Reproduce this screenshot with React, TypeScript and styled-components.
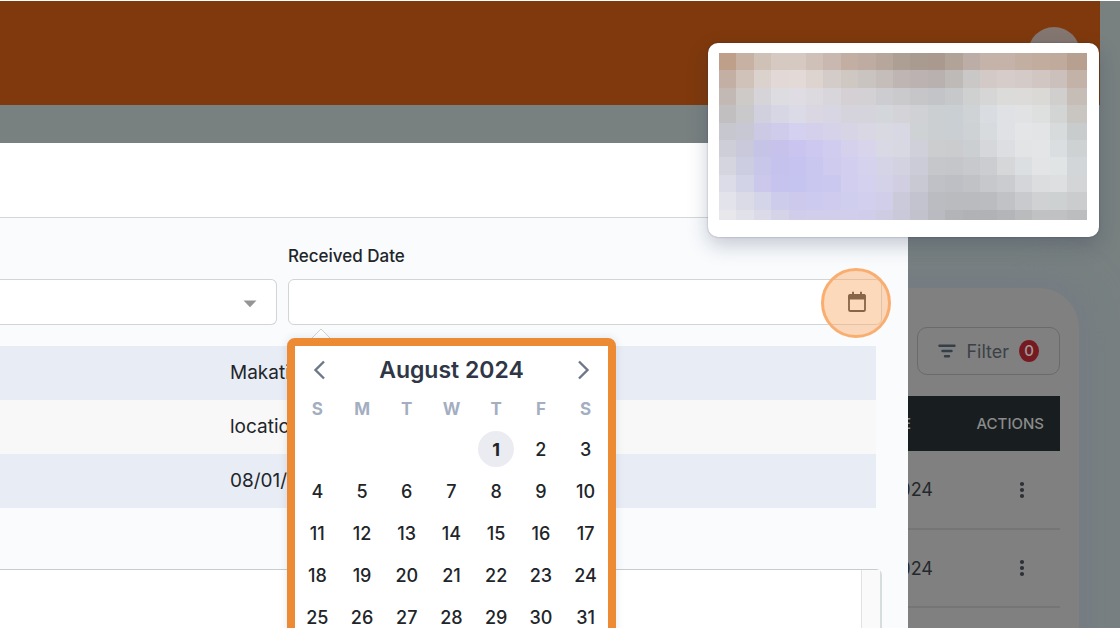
import React from "react";
import styled, { createGlobalStyle } from "styled-components";

const GlobalStyle = createGlobalStyle`
  *, *::before, *::after { box-sizing: border-box; }
  body {
    margin: 0;
    background: #788080;
    font-family: Inter, "Liberation Sans", sans-serif;
    color: #212529;
  }
  button, input, select, textarea { font: inherit; color: inherit; }
`;

const Page = styled.div`
  position: relative;
  height: 100vh;
  overflow: hidden;
  padding-right: 20px;
  border-top: 1px solid #ffffff;
`;

const TopBar = styled.header`
  display: flex;
  justify-content: flex-end;
  height: 104px;
  padding: 26px 20px;
  background: #7f390c;
`;

const Avatar = styled.div`
  width: 52px;
  height: 52px;
  border-radius: 50%;
  background: #847670;
`;

const Card = styled.main`
  margin: 183px 21px 0 0;
  padding: 39px 19px 0 0;
  min-height: 480px;
  border-radius: 0 40px 0 0;
  background: #808080;
  box-shadow: 0 0 40px 8px #747b85;
`;

const CardTools = styled.div`
  display: flex;
  justify-content: flex-end;
  margin-bottom: 21px;
`;

const FilterButton = styled.button`
  display: flex;
  align-items: center;
  gap: 10px;
  height: 48px;
  padding: 0 20px;
  border: 1px solid #6a6a6a;
  border-radius: 10px;
  background: transparent;
  color: #3b4146;
  font-size: 18px;
`;

const Badge = styled.span`
  width: 20px;
  height: 22px;
  border-radius: 50%;
  background: #761a22;
  color: #a09a9a;
  font-size: 15px;
  font-weight: 500;
  line-height: 22px;
  text-align: center;
`;

const Records = styled.table`
  width: 100%;
  border-collapse: collapse;
`;

const HeadCell = styled.th<{ $end: number }>`
  height: 55px;
  padding: 0 ${(p) => p.$end}px 0 0;
  background: #181e20;
  color: #8b8b8b;
  font-size: 15px;
  font-weight: 500;
  text-align: right;

  &:last-child { width: 109px; }
`;

const Cell = styled.td<{ $end: number }>`
  height: 78px;
  padding: 0 ${(p) => p.$end}px 0 0;
  border-bottom: 2px solid #757575;
  color: #24282b;
  font-size: 18px;
  text-align: right;
`;

const IconButton = styled.button`
  display: inline-flex;
  align-items: center;
  justify-content: center;
  padding: 0;
  border: 0;
  background: transparent;
`;

const RowMenuButton = styled(IconButton)`
  display: flex;
  margin-left: auto;
`;

const Modal = styled.section`
  position: absolute;
  top: 142px;
  right: 212px;
  bottom: 0;
  left: 0;
  display: flex;
  flex-direction: column;
  background: #f9fbfd;
`;

const ModalHeader = styled.header`
  flex: none;
  height: 75px;
  border-bottom: 1px solid #d3d7d7;
  background: #ffffff;
`;

const ModalBody = styled.div`
  flex: 1;
  min-height: 0;
  display: flex;
  flex-direction: column;
  padding: 26px 26px 0 0;
`;

const Fields = styled.div`
  display: flex;
  align-items: flex-end;
  gap: 11px;
`;

const SelectBox = styled.div`
  position: relative;
  flex: 0 0 277px;
`;

const Select = styled.select`
  display: block;
  appearance: none;
  width: 100%;
  height: 46px;
  border: 1px solid #d0d5d5;
  border-left: 0;
  border-radius: 0 6px 6px 0;
  background: #ffffff;
`;

const Caret = styled.svg`
  position: absolute;
  top: 21px;
  right: 20px;
  pointer-events: none;
`;

const DateField = styled.div`
  flex: 1;
`;

const Label = styled.label`
  display: block;
  margin-bottom: 11px;
  font-size: 17px;
  font-weight: 500;
  line-height: 24px;
`;

const DateBox = styled.div`
  position: relative;
  display: flex;
  height: 46px;
  border: 1px solid #d0d5d5;
  border-radius: 6px;
  background: #ffffff;
`;

const DateInput = styled.input`
  flex: 1;
  min-width: 0;
  padding: 0 12px;
  border: 0;
  border-radius: 6px;
  background: transparent;
  outline: none;
`;

const CalendarButton = styled(IconButton)`
  width: 48px;
`;

const ClickMarker = styled.span`
  position: absolute;
  top: -12px;
  right: -10px;
  width: 70px;
  height: 70px;
  border: 3px solid #f9ae70;
  border-radius: 50%;
  background: rgba(251, 170, 105, 0.45);
  pointer-events: none;
`;

const Popup = styled.div`
  position: absolute;
  z-index: 2;
  top: 58px;
  left: -2px;
  width: 329px;
  padding-bottom: 16px;
  border: 8px solid #ec8b33;
  border-radius: 8px;
  background: #ffffff;
  box-shadow: 0 0 8px rgba(40, 60, 90, 0.12);
`;

const PopupTip = styled.svg`
  position: absolute;
  top: 48px;
  left: 22px;
`;

const MonthBar = styled.div`
  display: flex;
  align-items: center;
  justify-content: space-between;
  height: 48px;
  padding: 0 12px;
`;

const Month = styled.h2`
  margin: 0;
  color: #2f3747;
  font-size: 23px;
  font-weight: 600;
  line-height: 32px;
`;

const StepButton = styled(IconButton)`
  width: 24px;
  height: 32px;
`;

const Days = styled.table`
  width: 100%;
  border-collapse: collapse;
  table-layout: fixed;
`;

const Weekday = styled.th`
  height: 34px;
  padding: 0 0 4px;
  color: #a3aec0;
  font-size: 17px;
  font-weight: 700;
`;

const DayCell = styled.td`
  height: 42px;
  padding: 0;
  text-align: center;
`;

const Day = styled.button<{ $today: boolean }>`
  width: 36px;
  height: 36px;
  padding: 0;
  border: 0;
  border-radius: 50%;
  background: ${(p) => (p.$today ? "#ebecf2" : "transparent")};
  font-size: 18px;
  font-weight: ${(p) => (p.$today ? 700 : 500)};
`;

const Details = styled.dl`
  flex: none;
  margin: 21px 6px 61px 0;
`;

const Detail = styled.dd`
  height: 54px;
  margin: 0;
  padding-left: 230px;
  background: #f8f8f8;
  font-size: 19px;
  line-height: 54px;

  &:nth-child(odd) { background: #e8ecf5; }
`;

const NotesBox = styled.div`
  flex: 1;
  display: flex;
  min-height: 0;
  border-top: 1px solid #c8cccc;
  border-right: 2px solid #d6dddd;
  border-radius: 0 6px 0 0;
  background: #ffffff;
`;

const Notes = styled.textarea`
  flex: 1;
  border: 0;
  outline: none;
  resize: none;
  background: transparent;
`;

const ScrollTrack = styled.div`
  width: 19px;
  border-left: 1px solid #e2e2e2;
  background: #fafafa;
`;

const Preview = styled.aside`
  position: absolute;
  z-index: 3;
  top: 42px;
  right: 21px;
  width: 391px;
  padding: 10px 12px 17px 11px;
  border-radius: 10px;
  background: #ffffff;
  box-shadow: 0 0 2px rgba(20, 30, 60, 0.35), 0 8px 20px rgba(40, 50, 80, 0.25);
`;

const Mosaic = styled.svg`
  display: block;
  width: 100%;
`;

const tiles = [
  "bd9f8a c7b1a3 d0c1b7 d6c9c1 d6c9c1 d0c1b8 c9b8b0 c2aea3 beaca2 b7a69b ae9f95 aa9b91 a9998f b2a399 bcada7 c5b3a9 c5b3a9 c3afa1 c2ac9d c0aa9b b7a090",
  "c3afa3 d0c2b9 dbd2ce e2d9d6 e3dad7 ddd4d0 d4ccc8 cec7c2 c9c4bf c4bdba bfb6b4 bbb2b1 b9b1b0 bdbab8 c9c8c6 d3cac8 d6ccca d4cac7 d1c6c1 cbc0bb c2b2a7",
  "c2b9b5 cdcac8 d6d4d8 dddce1 dfdde3 dcd9df d9d6db d4d0d4 d4d1d4 cdccd0 cac9cc c6c6c9 c3c4c7 c7c8ca cfd0d0 d6d6d6 dbdbda dcdbda dad9d6 d0cfcd c6bdb6",
  "c1bfbf c9c9cc d0d0de d7d6e5 dbdae7 dad7e3 d8d6e2 d5d4dd d5d4dd d3d6da d3d3d8 cfd1d5 cccfd2 c9cfd3 cfd3d6 d9dce0 dfe1e4 e0e2e4 dedfdf d3d5d5 c9c5c1",
  "c7c7cf c8c8d4 cbc9e3 cecbeb d4d0ef d4d0ec d5d2e9 d7d4e6 d8d7e3 d9d9e2 d7d8e3 cfd2d5 cbcfd2 c9cfd2 ced2d5 d7dbde dfe1e4 e4e5e7 e2e4e5 d8dbdc c9cccd",
  "ceced9 cac9dc c6c4e6 c6c2ec cac5f0 cdc8f0 d0ccef d5d1ec d7d4ec d9d8e5 d7d8e2 cfd0da cbcdce caccce cbcfd1 d5d7db dcdee1 e3e4e6 e4e5e7 dbdee0 cfd2d3",
  "d5d5e0 cccde1 c8c6e9 c5c2ed c7c3f0 c9c6f0 cecbef d1ceef d5d2ed d5d4e7 d3d2e1 ccccd8 c5c7ca c4c6c9 c7c9cc cccdd1 d5d7d9 dcdfe1 e2e4e6 e1e4e5 d3d6d8",
  "dcdce8 d3d3e7 cbc8eb c6c4ef c5c3f0 c9c7f0 cbc8f0 d1cef0 d3d1ee d4d2e8 d0cee0 c9c9d3 c0c1c6 bebfc4 c0c2c6 c6c8cb cbccd0 d5d6d9 dcdddf dddfe1 d3d5d7",
  "e3e3ec dbdbe8 d4d5e9 cdcceb ccc9ed cdcaef cecbef cfceee d1cfed d0cee8 cbcadb c3c3cf bbbcc1 b9bbbf b9bbbf babcc0 c0c2c5 c8cacd cfd1d3 ced1d2 caccce",
  "e8e7ec e1e1ea dadae8 d4d3e8 cfcdea d0ceeb d0ceeb d0ceea cfcde9 cecce3 cac9da c2c2cd babbc0 b3b4b8 b1b2b6 b0b2b6 b3b5b8 b9bbbd bfc1c3 bfc1c3 bbbdbe",
].map((row) => row.split(" "));

const details = ["Makati", "location", "08/01/24"];
const records = ["08/01/2024", "08/01/2024"];
const weekdays = ["S", "M", "T", "W", "T", "F", "S"];
const leadingBlanks = 4;
const weeks = Array.from({ length: 5 }, (_, w) =>
  weekdays.map((_, d) => w * 7 + d + 1 - leadingBlanks)
);

function Chevron({ d }: { d: string }) {
  return (
    <svg width="12" height="20" viewBox="0 0 12 20" fill="none" stroke="#6c7888" strokeWidth="2.4">
      <path d={d} />
    </svg>
  );
}

function DatePicker() {
  return (
    <>
      <Popup role="dialog" aria-label="Choose date">
        <MonthBar>
          <StepButton type="button" aria-label="Previous month">
            <Chevron d="M11 1.5 2.5 10 11 18.5" />
          </StepButton>
          <Month>August 2024</Month>
          <StepButton type="button" aria-label="Next month">
            <Chevron d="M1 1.5 9.5 10 1 18.5" />
          </StepButton>
        </MonthBar>
        <Days>
          <thead>
            <tr>{weekdays.map((d, i) => <Weekday key={i}>{d}</Weekday>)}</tr>
          </thead>
          <tbody>
            {weeks.map((week, w) => (
              <tr key={w}>
                {week.map((n) => (
                  <DayCell key={n}>
                    {n > 0 && <Day type="button" $today={n === 1}>{n}</Day>}
                  </DayCell>
                ))}
              </tr>
            ))}
          </tbody>
        </Days>
      </Popup>
      <PopupTip width="20" height="11" viewBox="0 0 20 11">
        <path d="M0.5 10.5 10 1 19.5 10.5" fill="#fff" stroke="#ccd5d5" />
      </PopupTip>
    </>
  );
}

export default function App() {
  return (
    <>
      <GlobalStyle />
      <Page>
        <TopBar>
          <Avatar />
        </TopBar>

        <Card>
          <CardTools>
            <FilterButton type="button">
              <svg width="18" height="14" viewBox="0 0 18 14" stroke="#343f48" strokeWidth="2.4" strokeLinecap="round">
                <path d="M1.5 1.7h15M4.5 7h9M7 12.3h4" />
              </svg>
              Filter
              <Badge>0</Badge>
            </FilterButton>
          </CardTools>
          <Records>
            <thead>
              <tr>
                <HeadCell $end={40}>DATE</HeadCell>
                <HeadCell $end={16}>ACTIONS</HeadCell>
              </tr>
            </thead>
            <tbody>
              {records.map((date, i) => (
                <tr key={i}>
                  <Cell $end={18}>{date}</Cell>
                  <Cell $end={28}>
                    <RowMenuButton type="button" aria-label="Row actions">
                      <svg width="20" height="20" viewBox="0 0 20 20" fill="#2c3034">
                        <circle cx="10" cy="4" r="2.1" />
                        <circle cx="10" cy="10" r="2.1" />
                        <circle cx="10" cy="16" r="2.1" />
                      </svg>
                    </RowMenuButton>
                  </Cell>
                </tr>
              ))}
            </tbody>
          </Records>
        </Card>

        <Modal role="dialog" aria-label="Received item">
          <ModalHeader />
          <ModalBody>
            <Fields>
              <SelectBox>
                <Select aria-label="Option" />
                <Caret width="14" height="8" viewBox="0 0 14 8">
                  <path d="M0.5 0.5h13L7 7.2z" fill="#959595" />
                </Caret>
              </SelectBox>
              <DateField>
                <Label htmlFor="received-date">Received Date</Label>
                <DateBox>
                  <DateInput id="received-date" type="text" />
                  <CalendarButton type="button" aria-label="Open calendar">
                    <svg width="20" height="22" viewBox="0 0 20 22">
                      <rect x="2" y="4" width="16" height="16" rx="1.6" fill="none" stroke="#2c2c2c" strokeWidth="1.8" />
                      <path d="M1.2 8.6V5a2 2 0 0 1 2-2h13.6a2 2 0 0 1 2 2v3.6z" fill="#2c2c2c" />
                      <path d="M6 4V.8M14 4V.8" stroke="#2c2c2c" strokeWidth="1.9" />
                    </svg>
                  </CalendarButton>
                  <ClickMarker />
                  <DatePicker />
                </DateBox>
              </DateField>
            </Fields>
            <Details>
              {details.map((text) => <Detail key={text}>{text}</Detail>)}
            </Details>
            <NotesBox>
              <Notes aria-label="Notes" />
              <ScrollTrack />
            </NotesBox>
          </ModalBody>
        </Modal>

        <Preview>
          <Mosaic viewBox="0 0 368 167" shapeRendering="crispEdges" aria-hidden="true">
            {tiles.map((row, y) =>
              row.map((color, x) => (
                <rect key={`${x}-${y}`} x={x * 17.4} y={y * 17.4} width="21" height="18" fill={`#${color}`} />
              ))
            )}
          </Mosaic>
        </Preview>
      </Page>
    </>
  );
}
